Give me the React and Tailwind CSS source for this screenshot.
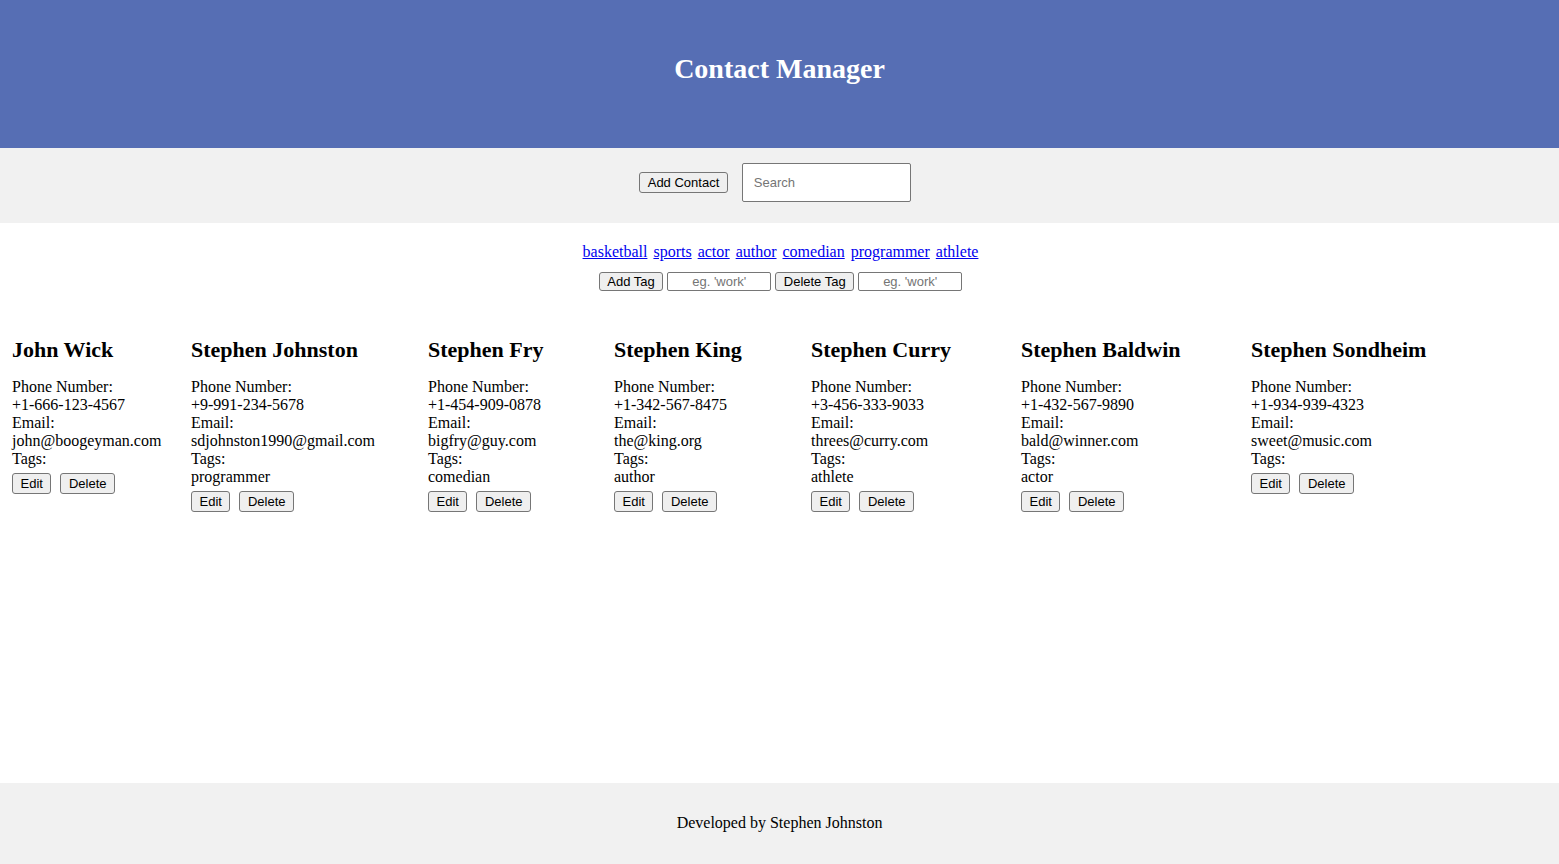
const contacts = [
  { name: 'John Wick', phone: '+1-666-123-4567', email: 'john@boogeyman.com', tags: [], w: 'w-[179px]' },
  { name: 'Stephen Johnston', phone: '+9-991-234-5678', email: 'sdjohnston1990@gmail.com', tags: ['programmer'], w: 'w-[237px]' },
  { name: 'Stephen Fry', phone: '+1-454-909-0878', email: 'bigfry@guy.com', tags: ['comedian'], w: 'w-[186px]' },
  { name: 'Stephen King', phone: '+1-342-567-8475', email: 'the@king.org', tags: ['author'], w: 'w-[197px]' },
  { name: 'Stephen Curry', phone: '+3-456-333-9033', email: 'threes@curry.com', tags: ['athlete'], w: 'w-[210px]' },
  { name: 'Stephen Baldwin', phone: '+1-432-567-9890', email: 'bald@winner.com', tags: ['actor'], w: 'w-[230px]' },
  { name: 'Stephen Sondheim', phone: '+1-934-939-4323', email: 'sweet@music.com', tags: [], w: 'w-[246px]' },
]

const tags = ['basketball', 'sports', 'actor', 'author', 'comedian', 'programmer', 'athlete']

const btn = "font-['Liberation_Sans',Arial,sans-serif] text-[13px] leading-[15px] text-black bg-[#efefef] border border-[#767676] rounded-[3px] px-[7.5px] py-[1px]"
const tagInput = "font-['Liberation_Sans',Arial,sans-serif] text-[13px] w-[104px] h-[19px] text-center border border-[#767676] rounded-[2px] bg-white placeholder:text-[#757575] outline-none"

function ContactCard({ contact }) {
  return (
    <div className={`${contact.w} shrink-0`}>
      <h2 className="text-[22px] leading-[25px] font-bold mb-[16px]">{contact.name}</h2>
      <div className="text-base leading-[18px]">
        <div>Phone Number:</div>
        <div>{contact.phone}</div>
        <div>Email:</div>
        <div>{contact.email}</div>
        <div>Tags:</div>
        {contact.tags.map(t => (
          <div key={t}>{t}</div>
        ))}
      </div>
      <div className="flex gap-[9px] mt-[5px]">
        <button className={btn + ' py-[2px]'}>Edit</button>
        <button className={btn + ' py-[2px]'}>Delete</button>
      </div>
    </div>
  )
}

export default function App() {
  return (
    <div className="min-h-[864px] flex flex-col bg-white text-black font-['Liberation_Serif','Times_New_Roman',serif]">
      <header className="h-[148px] bg-[#566eb4] flex justify-center pt-[53px]">
        <h1 className="text-[28px] leading-[32px] font-bold text-white">Contact Manager</h1>
      </header>

      <div className="h-[75px] bg-[#f1f1f1] flex justify-center items-start pt-[15px] pr-[9px]">
        <div className="flex items-center gap-[14px] h-[39px]">
          <button className={btn + ' py-[2px]'}>Add Contact</button>
          <input
            placeholder="Search"
            className="font-['Liberation_Sans',Arial,sans-serif] text-[13px] w-[169px] h-[39px] px-[11px] border border-[#767676] rounded-[2px] bg-white placeholder:text-[#757575] outline-none"
          />
        </div>
      </div>

      <div className="pt-5 flex flex-col items-center">
        <div className="flex gap-[6px] text-base leading-[18px] pl-[2px]">
          {tags.map(t => (
            <a key={t} href="#" className="text-[#0000ee] underline">{t}</a>
          ))}
        </div>
        <div className="flex items-center gap-1 mt-[11px] pl-[2px]">
          <button className={btn}>Add Tag</button>
          <input placeholder="eg. 'work'" className={tagInput} />
          <button className={btn}>Delete Tag</button>
          <input placeholder="eg. 'work'" className={tagInput} />
        </div>
      </div>

      <div className="flex items-start pl-3 pt-[46px]">
        {contacts.map(c => (
          <ContactCard key={c.name} contact={c} />
        ))}
      </div>

      <footer className="mt-auto h-[81px] bg-[#f1f1f1] flex items-center justify-center text-base pb-[2px]">
        Developed by Stephen Johnston
      </footer>
    </div>
  )
}
